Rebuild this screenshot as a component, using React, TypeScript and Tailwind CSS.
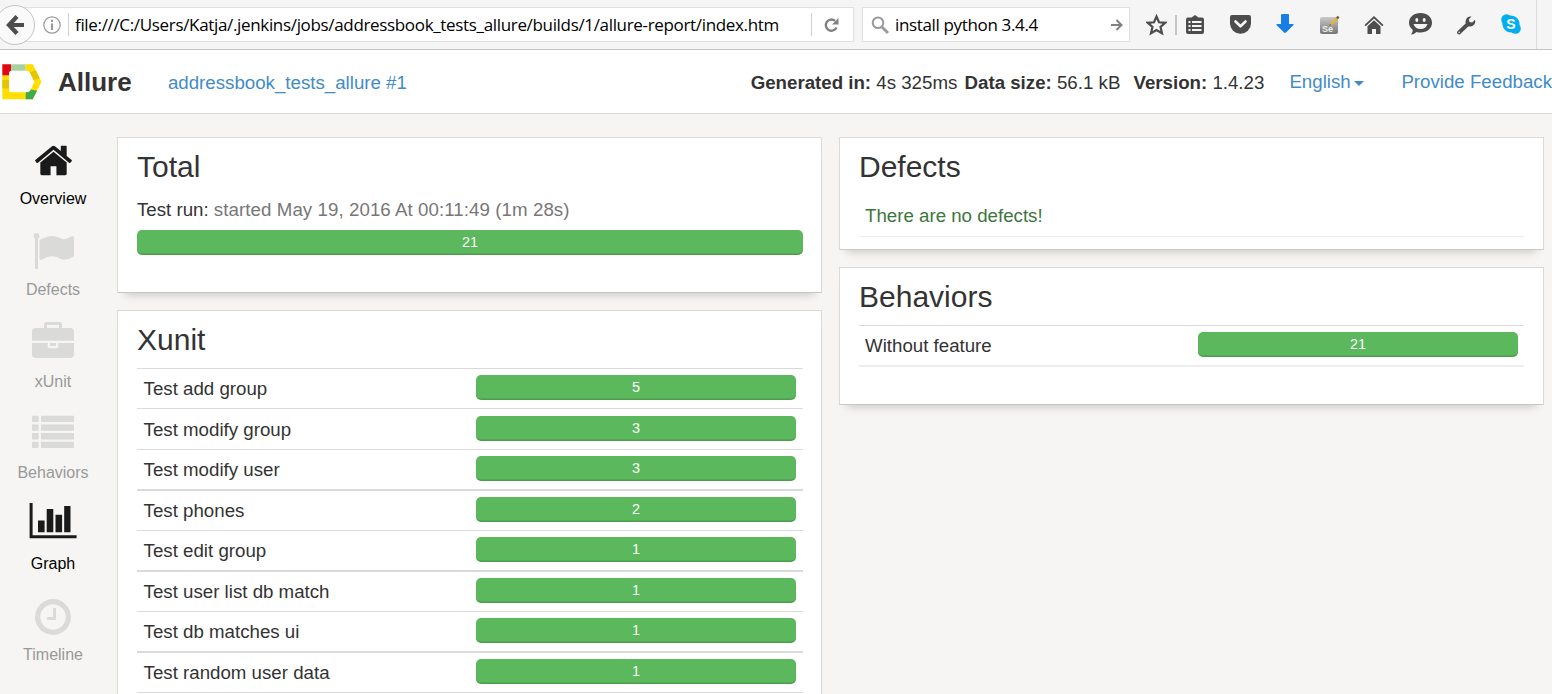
import type { ReactNode } from "react";

type NavEntry = { label: string; icon: ReactNode; active?: boolean };

const navEntries: NavEntry[] = [
  {
    label: "Overview",
    active: true,
    icon: (
      <svg className="mt-px h-[41px] w-[41px] fill-current" viewBox="0 0 1792 1792">
        <path d="M1472 992v480q0 26-19 45t-45 19h-384v-384h-256v384h-384q-26 0-45-19t-19-45v-480q0-1 .5-3t.5-3l575-474 575 474q1 2 1 6zm223-69l-62 74q-8 9-21 11h-3q-13 0-21-7l-692-577-692 577q-12 8-24 7-13-2-21-11l-62-74q-8-10-7-23.5t11-21.5l719-599q32-26 76-26t76 26l244 204v-195q0-14 9-23t23-9h192q14 0 23 9t9 23v408l219 182q10 8 11 21.5t-7 23.5z" />
      </svg>
    ),
  },
  {
    label: "Defects",
    icon: (
      <svg className="h-[42px] w-[42px] fill-current" viewBox="0 0 1792 1792">
        <path d="M320 256q0 72-64 110v1266q0 13-9.5 22.5t-22.5 9.5h-64q-13 0-22.5-9.5t-9.5-22.5v-1266q-64-38-64-110 0-53 37.500-90.500t90.500-37.500 90.500 37.500 37.500 90.500zm1472 64v763q0 25-12.500 38.500t-39.500 27.500q-215 116-369 116-61 0-123.500-22t-108.500-48-115.500-48-142.500-22q-192 0-464 146-17 9-33 9-26 0-45-19t-19-45v-742q0-32 31-55 21-14 79-43 236-120 421-120 107 0 200 29t219 88q38 19 88 19 54 0 117.500-21t110-47 88-47 54.500-21q26 0 45 19t19 45z" />
      </svg>
    ),
  },
  {
    label: "xUnit",
    icon: (
      <svg className="h-[42px] w-[42px] fill-current" viewBox="0 0 1792 1792">
        <path d="M640 256h512v-128h-512v128zm1152 640v480q0 66-47 113t-113 47h-1472q-66 0-113-47t-47-113v-480h672v160q0 26 19 45t45 19h320q26 0 45-19t19-45v-160h672zm-768 0v128h-256v-128h256zm768-480v384h-1792v-384q0-66 47-113t113-47h352v-160q0-40 28-68t68-28h576q40 0 68 28t28 68v160h352q66 0 113 47t47 113z" />
      </svg>
    ),
  },
  {
    label: "Behaviors",
    icon: (
      <svg className="h-[42px] w-[42px] fill-current" viewBox="0 0 42 42">
        {[2.7, 11.4, 20.1, 28.8].map((y) => (
          <g key={y}>
            <rect x="0" y={y} width="6.6" height="6.3" rx=".4" />
            <rect x="9" y={y} width="33" height="6.3" rx=".4" />
          </g>
        ))}
      </svg>
    ),
  },
  {
    label: "Graph",
    active: true,
    icon: (
      <svg className="-mt-[1.5px] mb-[1.5px] h-[42px] w-[48px] fill-current" viewBox="0 0 48 42">
        <path d="M.6 0h3v32.2H47.6v3H.6zM9 17.600h6.600v11.700H9zM17.700 6h6.600v23.300h-6.600zM26.500 11.700h6.600v17.600h-6.600zM35.200 3h6.300v26.300h-6.300z" />
      </svg>
    ),
  },
  {
    label: "Timeline",
    icon: (
      <svg className="mt-[.5px] -mb-[.5px] h-[42px] w-[42px] fill-current" viewBox="0 0 1792 1792">
        <path d="M1024 544v448q0 14-9 23t-23 9h-320q-14 0-23-9t-9-23v-64q0-14 9-23t23-9h224v-352q0-14 9-23t23-9h64q14 0 23 9t9 23zm416 352q0-148-73-273t-198-198-273-73-273 73-198 198-73 273 73 273 198 198 273 73 273-73 198-198 73-273zm224 0q0 209-103 385.500t-279.500 279.500-385.500 103-385.500-103-279.500-279.500-103-385.500 103-385.500 279.500-279.500 385.500-103 385.500 103 279.500 279.500 103 385.500z" />
      </svg>
    ),
  },
];

const suites = [
  { name: "Test add group", count: 5, row: "h-10 border-b pt-1.5" },
  { name: "Test modify group", count: 3, row: "h-[41px] border-b pt-[7px]" },
  { name: "Test modify user", count: 3, row: "h-[41px] border-b-2 pt-1.5" },
  { name: "Test phones", count: 2, row: "h-10 border-b pt-1.5" },
  { name: "Test edit group", count: 1, row: "h-[41px] border-b-2 pt-1.5" },
  { name: "Test user list db match", count: 1, row: "h-10 border-b pt-1.5" },
  { name: "Test db matches ui", count: 1, row: "h-[41px] border-b-2 pt-1.5" },
  { name: "Test random user data", count: 1, row: "h-10 border-b pt-1.5" },
];

function Bar({ value, className }: { value: number; className: string }) {
  return (
    <div
      className={`h-[25px] shrink-0 rounded-[5px] bg-[#5cb85c] text-center text-[14.4px] leading-[25px] text-white shadow-[inset_0_-1.5px_0_rgba(0,0,0,0.15)] ${className}`}
    >
      {value}
    </div>
  );
}

function Card({ title, className, children }: { title: string; className: string; children: ReactNode }) {
  return (
    <section
      className={`border border-[#dadada] border-b-[#c8c8c7] bg-white shadow-[0_9px_9px_-8px_rgba(0,0,0,0.22)] ${className}`}
    >
      <h2 className="pt-2.5 text-[30px] leading-[38px]">{title}</h2>
      {children}
    </section>
  );
}

function Slot({ children }: { children: ReactNode }) {
  return <div className="flex w-[45px] shrink-0 items-center justify-center">{children}</div>;
}

function BrowserBar() {
  return (
    <div className="flex h-[50px] items-center border-b border-[#c2c2c2] bg-[#f5f5f5] font-['Open_Sans',sans-serif] text-black">
      <div className="relative z-10 -ml-[5px] flex h-10 w-10 shrink-0 items-center justify-center rounded-full border border-[#c4c4c4] bg-[#fafafa]">
        <svg className="h-5 w-5" viewBox="0 0 20 20" fill="none" stroke="#4d4d4d" strokeWidth="4.2">
          <path d="M12 1.500L4 10l8 8.500M4 10h15" />
        </svg>
      </div>
      <div className="-ml-5 flex h-[35px] w-[839px] shrink-0 items-center border border-[#e0e0e0] bg-white">
        <svg className="ml-[27px] h-[18px] w-[18px] shrink-0" viewBox="0 0 18 18" fill="none" stroke="#9a9a9a">
          <circle cx="9" cy="9" r="8.200" strokeWidth="1.200" />
          <path d="M9 3.800v2.200M9 7.500v6.500" strokeWidth="2.200" />
        </svg>
        <div className="ml-[7px] h-[23px] w-px shrink-0 bg-[#d0d0d0]" />
        <span className="ml-1.5 w-[736px] shrink-0 whitespace-nowrap text-[17px] tracking-[-0.335px]">
          file:///C:/Users/Katja/.jenkins/jobs/addressbook_tests_allure/builds/1/allure-report/index.htm
        </span>
        <div className="h-[23px] w-px shrink-0 bg-[#d0d0d0]" />
        <svg className="ml-3 h-4 w-4 shrink-0" viewBox="0 0 16 16">
          <path d="M12.500 10.500A5.600 5.600 0 1 1 11 3.800" fill="none" stroke="#808080" strokeWidth="2.400" />
          <path d="M14.500 1v6.500H8z" fill="#808080" />
        </svg>
      </div>
      <div className="ml-2 flex h-[35px] w-[268px] shrink-0 items-center border border-[#e0e0e0] bg-white">
        <svg className="ml-2 h-[18px] w-[18px] shrink-0" viewBox="0 0 18 18" fill="none" stroke="#9a9a9a">
          <circle cx="7" cy="6.800" r="5.300" strokeWidth="2" />
          <path d="M11 11l6 6" strokeWidth="2.800" />
        </svg>
        <span className="ml-1.5 w-[215px] shrink-0 whitespace-nowrap text-[17px] tracking-[-0.35px]">install python 3.4.4</span>
        <svg className="ml-px h-3 w-3" viewBox="0 0 12 12" fill="none" stroke="#808080" strokeWidth="2">
          <path d="M0 6h10M5.500 1l5 5-5 5" />
        </svg>
      </div>
      <svg className="ml-4 h-[22px] w-[21px] shrink-0" viewBox="0 0 21 22" fill="none" stroke="#4d4d4d" strokeWidth="2.200">
        <path d="M10.500 2.500l2.500 5.800 6.200.5-4.700 4.200 1.500 6.300-5.500-3.300L5 19.300 6.500 13 1.800 8.800 8 8.300z" />
      </svg>
      <div className="-mr-1 ml-2 h-5 w-0.5 shrink-0 bg-[#c6c6c6]" />
      <Slot>
        <svg className="-ml-px h-5 w-5" viewBox="0 0 20 20">
          <path d="M3 2.500h3.500L10 0l3.500 2.500H17q2 0 2 2V17q0 2-2 2H3q-2 0-2-2V4.500q0-2 2-2z" fill="#4d4d4d" />
          <path d="M3.500 6h2v2h-2zm3.500 0h9.500v2H7zM3.500 10h2v2h-2zM7 10h9.500v2H7zM3.500 14h2v2h-2zM7 14h9.500v2H7z" fill="#f5f5f5" />
        </svg>
      </Slot>
      <Slot>
        <svg className="h-[19px] w-[21px]" viewBox="0 0 21 19">
          <path d="M2 0h17q2 0 2 2v6.500a10.500 10.300 0 0 1-21 0V2q0-2 2-2z" fill="#4d4d4d" />
          <path d="M5.500 6.500l5 4.800 5-4.800" fill="none" stroke="#f5f5f5" strokeWidth="2.600" strokeLinecap="round" strokeLinejoin="round" />
        </svg>
      </Slot>
      <Slot>
        <svg className="-ml-0.5 -mt-0.5 h-[19px] w-[18px]" viewBox="0 0 18 19" fill="#177ee6">
          <path d="M5 1q0-1 1-1h6q1 0 1 1v9h4q1 0 .5 1L10 18.500q-1 .8-2 0L.5 11Q0 10 1 10h4z" />
        </svg>
      </Slot>
      <Slot>
        <svg className="-ml-px h-5 w-5" viewBox="0 0 20 20">
          <defs>
            <linearGradient id="steel" x1="0" y1="0" x2="0" y2="1">
              <stop offset="0" stopColor="#c9c9c9" />
              <stop offset="1" stopColor="#757575" />
            </linearGradient>
          </defs>
          <rect x="0" y="2" width="18" height="17" rx="2" fill="url(#steel)" />
          <text x="2" y="16.500" fontSize="9" fontWeight="bold" fill="#eee" fontFamily="Liberation Sans">Se</text>
          <path d="M9.500 10.500l1-2.500 6.500-6.500 2 1.800-7 6.500z" fill="#e3b535" />
          <path d="M16 2.500l1.800-1.700 1.700 1.600-1.700 1.800zM9 11l1.300-2.300 1 1z" fill="#6b6350" />
        </svg>
      </Slot>
      <Slot>
        <svg className="-ml-[3px] h-5 w-5" viewBox="0 0 20 20" fill="#4d4d4d">
          <path d="M10 1l9.500 9-1.200 1.300L10 3.500l-8.300 7.800L.5 10z" />
          <path d="M10 5.200l6.500 6V19H12v-5H8v5H3.500v-7.800z" />
        </svg>
      </Slot>
      <Slot>
        <svg className="-mt-px h-[22px] w-[23px]" viewBox="0 0 23 22">
          <path d="M11.500 0C18 0 23 4 23 9.800S18 19.500 11.500 19.500q-2 0-4-.6Q5 21.500 2 21.500q2-2 1.700-4.800Q0 14 0 9.800C0 4 5 0 11.500 0z" fill="#4d4d4d" />
          <ellipse cx="7.800" cy="7" rx="1.500" ry="2" fill="#f5f5f5" />
          <ellipse cx="15.200" cy="7" rx="1.500" ry="2" fill="#f5f5f5" />
          <path d="M4.500 11h14q-1.500 5-7 5t-7-5z" fill="#f5f5f5" />
        </svg>
      </Slot>
      <Slot>
        <svg className="h-5 w-5" viewBox="0 0 20 20">
          <path d="M3 17.500L12 9" stroke="#4d4d4d" strokeWidth="3.800" strokeLinecap="round" />
          <path d="M15.500 1.500L12.800 4.400l.7 2.500 2.700.6 2.800-2.800a5.200 5.200 0 0 1-7.200 6.200A5.200 5.200 0 0 1 15.500 1.500z" fill="#4d4d4d" />
          <circle cx="3.200" cy="17.200" r=".8" fill="#f5f5f5" />
        </svg>
      </Slot>
      <Slot>
        <svg className="-mt-0.5 h-5 w-5" viewBox="0 0 20 20">
          <circle cx="10" cy="10" r="8.600" fill="#00aff0" />
          <circle cx="5.500" cy="5.500" r="5.300" fill="#00aff0" />
          <circle cx="14.500" cy="14.500" r="5.300" fill="#00aff0" />
          <text x="10" y="15" textAnchor="middle" fontSize="14" fontWeight="bold" fill="#fff" fontFamily="Liberation Sans">S</text>
        </svg>
      </Slot>
      <div className="ml-[3px] h-full w-px bg-[#dcdcdc]" />
    </div>
  );
}

function ReportHeader() {
  return (
    <header className="flex h-16 items-center whitespace-nowrap border-b border-[#dadada] bg-white text-[18.7px]">
      <svg className="ml-0.5 h-9 w-10 shrink-0" viewBox="0 0 40 36">
        <path d="M23.500.3h7.200L39.400 17.700 30.700 35.300H.3V11h6.700v15q0 2.300 2.300 2.300h16q2 0 3-1.700l4-8.900-4.200-9Q27 6.700 25.300 6.700h-1.800z" fill="#ffde00" />
        <path d="M.3.3H9v6.500q-2 .2-2 2.200v2.300H.3z" fill="#e30613" />
        <path d="M9 .3h14.600v6.400H9z" fill="#a8d1a2" />
        <path d="M34 6.500l3.700 7.800-6 1.700-4-8z" fill="#e5c400" />
        <path d="M.3 15.800H7v8.500H.3z" fill="#e5c400" />
        <path d="M28.800 25.500l6.300 1.200-4.400 8.600h-7v-7h1.600q2 0 3-1.700z" fill="#3fac49" />
      </svg>
      <span className="ml-4 w-[110px] pt-px text-[26px] font-bold">Allure</span>
      <a className="w-[583px] pt-[3px] text-[#428bca]">addressbook_tests_allure #1</a>
      <span className="w-[214px] pt-[3px]"><b>Generated in:</b> 4s 325ms</span>
      <span className="w-[169px] pt-[3px]"><b>Data size:</b> 56.1 kB</span>
      <span className="w-[156px] pt-[3px]"><b>Version:</b> 1.4.23</span>
      <a className="flex w-[112px] shrink-0 items-center pt-0.5 text-[#428bca]">
        English
        <svg className="ml-[3px] mt-0.5 h-[5px] w-[10px] fill-current" viewBox="0 0 10 5"><path d="M0 0h10L5 5z" /></svg>
      </a>
      <a className="shrink-0 pt-0.5 text-[#428bca]">Provide Feedback</a>
    </header>
  );
}

export default function App() {
  return (
    <div className="flex h-[694px] w-[1552px] flex-col overflow-hidden bg-[#f6f5f3] font-['Liberation_Sans',Arial,sans-serif] text-[#333]">
      <BrowserBar />
      <ReportHeader />
      <div className="flex min-h-0 flex-1">
        <nav className="w-[106px] shrink-0 pt-[25px]">
          {navEntries.map((entry) => (
            <div key={entry.label} className="flex h-[91.3px] flex-col items-center">
              <div className={entry.active ? "text-[#1a1a1a]" : "text-[#dadad8]"}>{entry.icon}</div>
              <span className={`mt-1.5 text-base leading-6 ${entry.active ? "text-black" : "text-[#999]"}`}>{entry.label}</span>
            </div>
          ))}
        </nav>
        <main className="ml-[11px] flex gap-[17px] pt-[23px] text-[18.7px]">
          <div className="flex w-[705px] flex-col gap-[17px]">
            <Card title="Total" className="h-[156px] shrink-0 pl-[19px] pr-[18px]">
              <p className="mt-2.5 leading-7">
                Test run: <span className="tracking-[0.07px] text-[#777]">started May 19, 2016 At 00:11:49 (1m 28s)</span>
              </p>
              <Bar value={21} className="mt-1.5 w-full" />
            </Card>
            <Card title="Xunit" className="h-[420px] shrink-0 pl-[19px] pr-[18px]">
              <div className="mt-[9px] border-t border-[#dadada]">
                {suites.map((suite) => (
                  <div key={suite.name} className={`flex justify-between border-[#dadada] pl-[6.600px] pr-[7px] ${suite.row}`}>
                    <span className="leading-[27px]">{suite.name}</span>
                    <Bar value={suite.count} className="w-80" />
                  </div>
                ))}
              </div>
            </Card>
          </div>
          <div className="flex w-[705px] flex-col gap-[17px]">
            <Card title="Defects" className="h-[113px] px-[19px]">
              <div className="mt-2 h-[43px] border-b border-[#eee] px-1.5 pt-2 leading-7 text-[#3c763d]">There are no defects!</div>
            </Card>
            <Card title="Behaviors" className="h-[138px] px-[19px]">
              <div className="mt-[9px] flex h-[42px] justify-between border-t border-b-2 border-t-[#dadada] border-b-[#eee] px-1.5 pt-1.5">
                <span className="leading-[27px]">Without feature</span>
                <Bar value={21} className="w-80" />
              </div>
            </Card>
          </div>
        </main>
      </div>
    </div>
  );
}
